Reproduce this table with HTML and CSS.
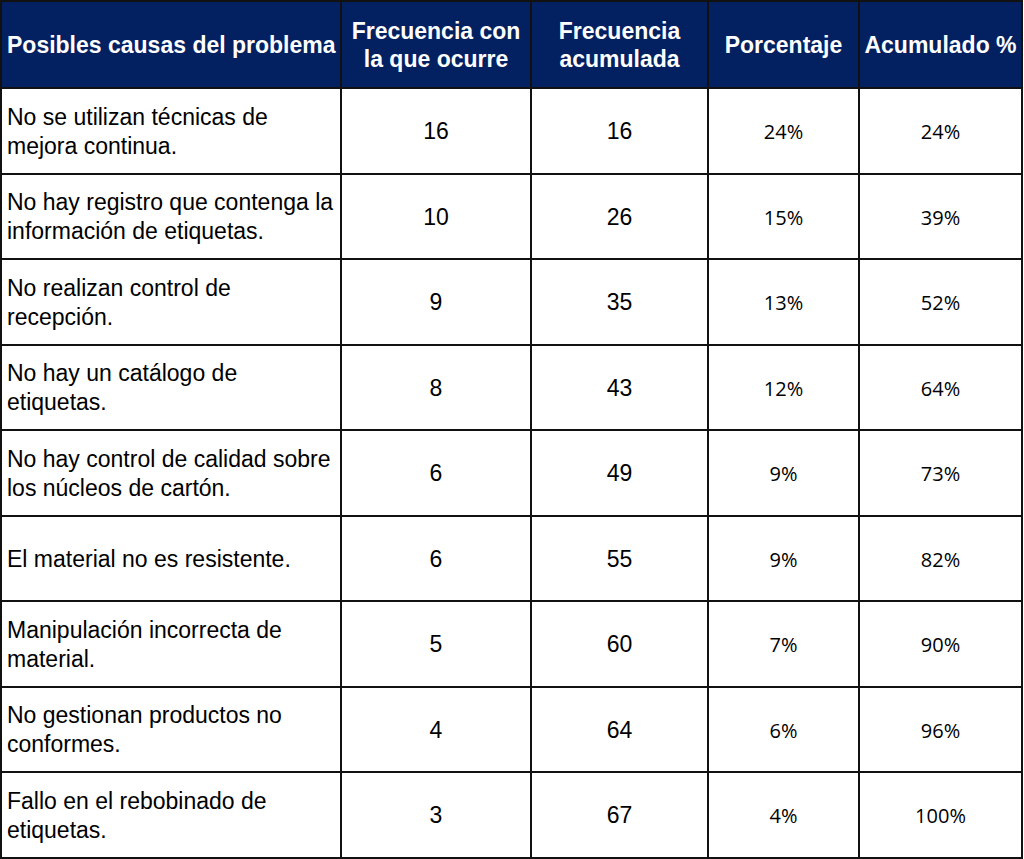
FILE: index.html
```html
<!DOCTYPE html>
<html lang="es">
<head>
<meta charset="utf-8">
<link rel="stylesheet" href="styles.css">
</head>
<body>
<table class="pareto">
  <colgroup>
    <col class="c1"><col class="c2"><col class="c3"><col class="c4"><col class="c5">
  </colgroup>
  <thead>
    <tr>
      <th class="cause-h">Posibles causas del problema</th>
      <th>Frecuencia con<br>la que ocurre</th>
      <th>Frecuencia<br>acumulada</th>
      <th>Porcentaje</th>
      <th>Acumulado %</th>
    </tr>
  </thead>
  <tbody>
    <tr><td class="cause">No se utilizan técnicas de<br>mejora continua.</td><td class="num">16</td><td class="num">16</td><td class="pct">24%</td><td class="pct">24%</td></tr>
    <tr><td class="cause">No hay registro que contenga la<br>información de etiquetas.</td><td class="num">10</td><td class="num">26</td><td class="pct">15%</td><td class="pct">39%</td></tr>
    <tr><td class="cause">No realizan control de<br>recepción.</td><td class="num">9</td><td class="num">35</td><td class="pct">13%</td><td class="pct">52%</td></tr>
    <tr><td class="cause">No hay un catálogo de<br>etiquetas.</td><td class="num">8</td><td class="num">43</td><td class="pct">12%</td><td class="pct">64%</td></tr>
    <tr><td class="cause">No hay control de calidad sobre<br>los núcleos de cartón.</td><td class="num">6</td><td class="num">49</td><td class="pct">9%</td><td class="pct">73%</td></tr>
    <tr><td class="cause">El material no es resistente.</td><td class="num">6</td><td class="num">55</td><td class="pct">9%</td><td class="pct">82%</td></tr>
    <tr><td class="cause">Manipulación incorrecta de<br>material.</td><td class="num">5</td><td class="num">60</td><td class="pct">7%</td><td class="pct">90%</td></tr>
    <tr><td class="cause">No gestionan productos no<br>conformes.</td><td class="num">4</td><td class="num">64</td><td class="pct">6%</td><td class="pct">96%</td></tr>
    <tr><td class="cause">Fallo en el rebobinado de<br>etiquetas.</td><td class="num">3</td><td class="num">67</td><td class="pct">4%</td><td class="pct">100%</td></tr>
  </tbody>
</table>
</body>
</html>
```

FILE: styles.css
```css
html, body {
  margin: 0;
  padding: 0;
  background: #ffffff;
}

.pareto {
  border-collapse: collapse;
  table-layout: fixed;
  width: 1021px;
  font-family: "Liberation Sans", Arial, sans-serif;
  color: #000;
}

.c1 { width: 340px; }
.c2 { width: 190px; }
.c3 { width: 177px; }
.c4 { width: 151px; }
.c5 { width: 163px; }

.pareto th,
.pareto td {
  border: 2px solid #111;
  padding: 0;
}

.pareto thead tr {
  height: 87px;
}

.pareto th {
  background: #032061;
  color: #ffffff;
  font-weight: bold;
  font-size: 23px;
  line-height: 28px;
  text-align: center;
  vertical-align: middle;
  white-space: nowrap;
}

.pareto th.cause-h {
  text-align: left;
  padding-left: 5px;
}

.pareto tbody tr {
  height: 85.5px;
}

.pareto td {
  vertical-align: middle;
  font-size: 23px;
  line-height: 29px;
  padding-top: 2px;
}

.pareto td.cause {
  text-align: left;
  padding-left: 5px;
  white-space: nowrap;
}

.pareto td.num {
  text-align: center;
}

.pareto td.pct {
  text-align: center;
  font-family: "Open Sans", "Liberation Sans", sans-serif;
  font-size: 20px;
}
```
